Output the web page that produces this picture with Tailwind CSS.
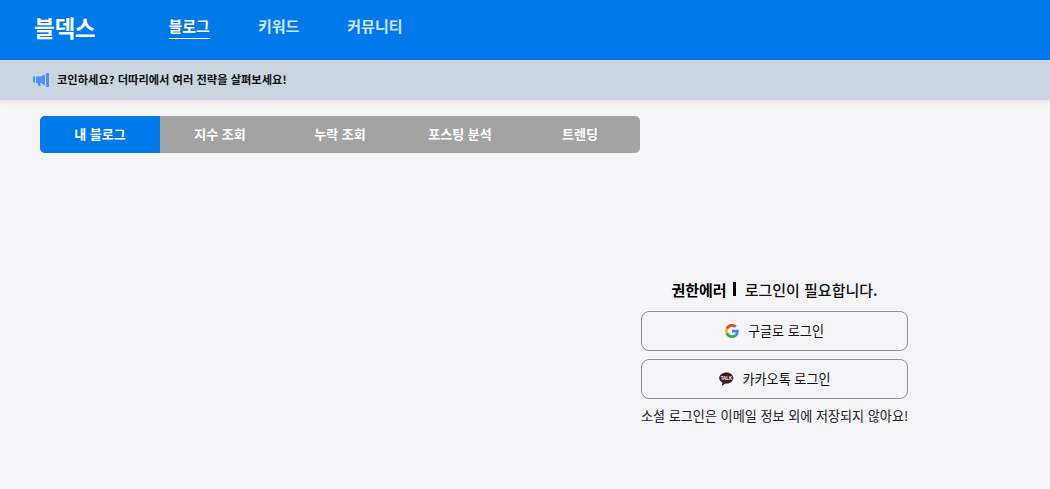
<!DOCTYPE html>
<html lang="ko">
<head>
<meta charset="utf-8">
<script src="https://cdn.jsdelivr.net/npm/@tailwindcss/browser@4"></script>
</head>
<body class="bg-[#f5f5f7] font-['Noto_Sans_CJK_KR','Noto_Sans',sans-serif] h-[489px] overflow-hidden">
<header class="h-[60px] bg-[#0079ea] flex items-center pl-[34px] text-white pb-[3px]">
  <div class="w-[134.500px] mb-[2px] text-[22.500px] font-bold leading-none tracking-[-0.3px]">블덱스</div>
  <nav class="flex gap-[48px] text-[15px] font-bold leading-none">
    <a class="border-b border-white pb-[5px]">블로그</a>
    <a class="text-white/80 pb-[5px] mb-px">키워드</a>
    <a class="text-white/80 pb-[5px] mb-px">커뮤니티</a>
  </nav>
</header>
<div class="h-[40px] bg-[#cbd5e1] flex items-center pl-[33px] gap-[8px] text-[11.250px] font-bold text-[#111] shadow-[0_2px_5px_rgba(90,110,190,0.10)]">
  <svg width="16" height="14" viewBox="0 0 16 14" fill="#4f8ff7"><path d="M0 3.500h2v6H0zM3 3.500h4.500L12 1.500v11L7.500 10H7l.8 3H5.600L4.600 10H3z"/><rect x="13" y="0" width="3" height="14" rx="1"/></svg>
  <span class="pb-[2px]">코인하세요? 더따리에서 여러 전략을 살펴보세요!</span>
</div>
<main class="flex pl-[40px] pt-[16px]">
  <div class="w-[600px] h-[37px] flex rounded-[5px] overflow-hidden bg-[#a3a3a3] text-white text-[13px] font-bold">
    <div class="w-[120px] pb-[2px] flex items-center justify-center bg-[#0079ea]">내 블로그</div>
    <div class="w-[120px] pb-[2px] flex items-center justify-center">지수 조회</div>
    <div class="w-[120px] pb-[2px] flex items-center justify-center">누락 조회</div>
    <div class="w-[120px] pb-[2px] flex items-center justify-center">포스팅 분석</div>
    <div class="w-[120px] pb-[2px] flex items-center justify-center">트렌딩</div>
  </div>
  <section class="ml-[1px] w-[267px] pt-[162px] flex flex-col text-[#111]">
    <p class="h-[22px] flex items-center justify-center text-[15px] leading-none"><b class="font-bold text-black">권한에러</b><span class="w-[3px] h-[14px] bg-black ml-[6px] mr-[9px]"></span><span class="font-medium">로그인이 필요합니다.</span></p>
    <button class="mt-[11px] h-[40px] border border-[#8f8f8f] rounded-[8px] flex items-center justify-center gap-[9px] text-[13.100px]">
      <svg width="14" height="14" viewBox="0 0 48 48"><path fill="#EA4335" d="M24 9.500c3.500 0 6.700 1.200 9.200 3.600l6.900-6.900C35.900 2.400 30.500 0 24 0 14.600 0 6.500 5.400 2.600 13.200l8 6.200C12.500 13.700 17.800 9.500 24 9.500z"/><path fill="#4285F4" d="M47 24.500c0-1.600-.1-3.100-.4-4.500H24v9h12.900c-.6 3-2.200 5.500-4.700 7.200l7.700 6C44.400 38 47 31.800 47 24.500z"/><path fill="#FBBC05" d="M10.600 28.600c-.5-1.400-.8-3-.8-4.600s.3-3.200.8-4.600l-8-6.200C.9 16.500 0 20.100 0 24s.9 7.500 2.600 10.800l8-6.200z"/><path fill="#34A853" d="M24 48c6.500 0 11.900-2.100 15.900-5.800l-7.700-6c-2.200 1.500-4.900 2.300-8.200 2.300-6.200 0-11.500-4.200-13.400-9.900l-8 6.200C6.500 42.600 14.600 48 24 48z"/></svg>
      <span>구글로 로그인</span>
    </button>
    <button class="mt-[8px] h-[40px] border border-[#8f8f8f] rounded-[8px] flex items-center justify-center gap-[9px] text-[13.100px]">
      <svg width="15" height="14" viewBox="0 0 15 14"><path fill="#3a1d1d" d="M7.500.5C3.400.5.200 3 .200 6.100c0 2 1.300 3.700 3.300 4.700l-.7 2.700c-.1.200.1.300.3.200l3.200-2.100c.2 0 .5.100.7.100 4.100 0 7.300-2.500 7.300-5.600S11.600.5 7.500.5z"/><text x="7.500" y="7.800" text-anchor="middle" fill="#fff" font-size="4.500" font-weight="700" font-family="Liberation Sans, sans-serif">TALK</text></svg>
      <span>카카오톡 로그인</span>
    </button>
    <p class="mt-[7px] text-[13.100px] leading-[20px] text-center text-[#222] whitespace-nowrap">소셜 로그인은 이메일 정보 외에 저장되지 않아요!</p>
  </section>
</main>
</body>
</html>
